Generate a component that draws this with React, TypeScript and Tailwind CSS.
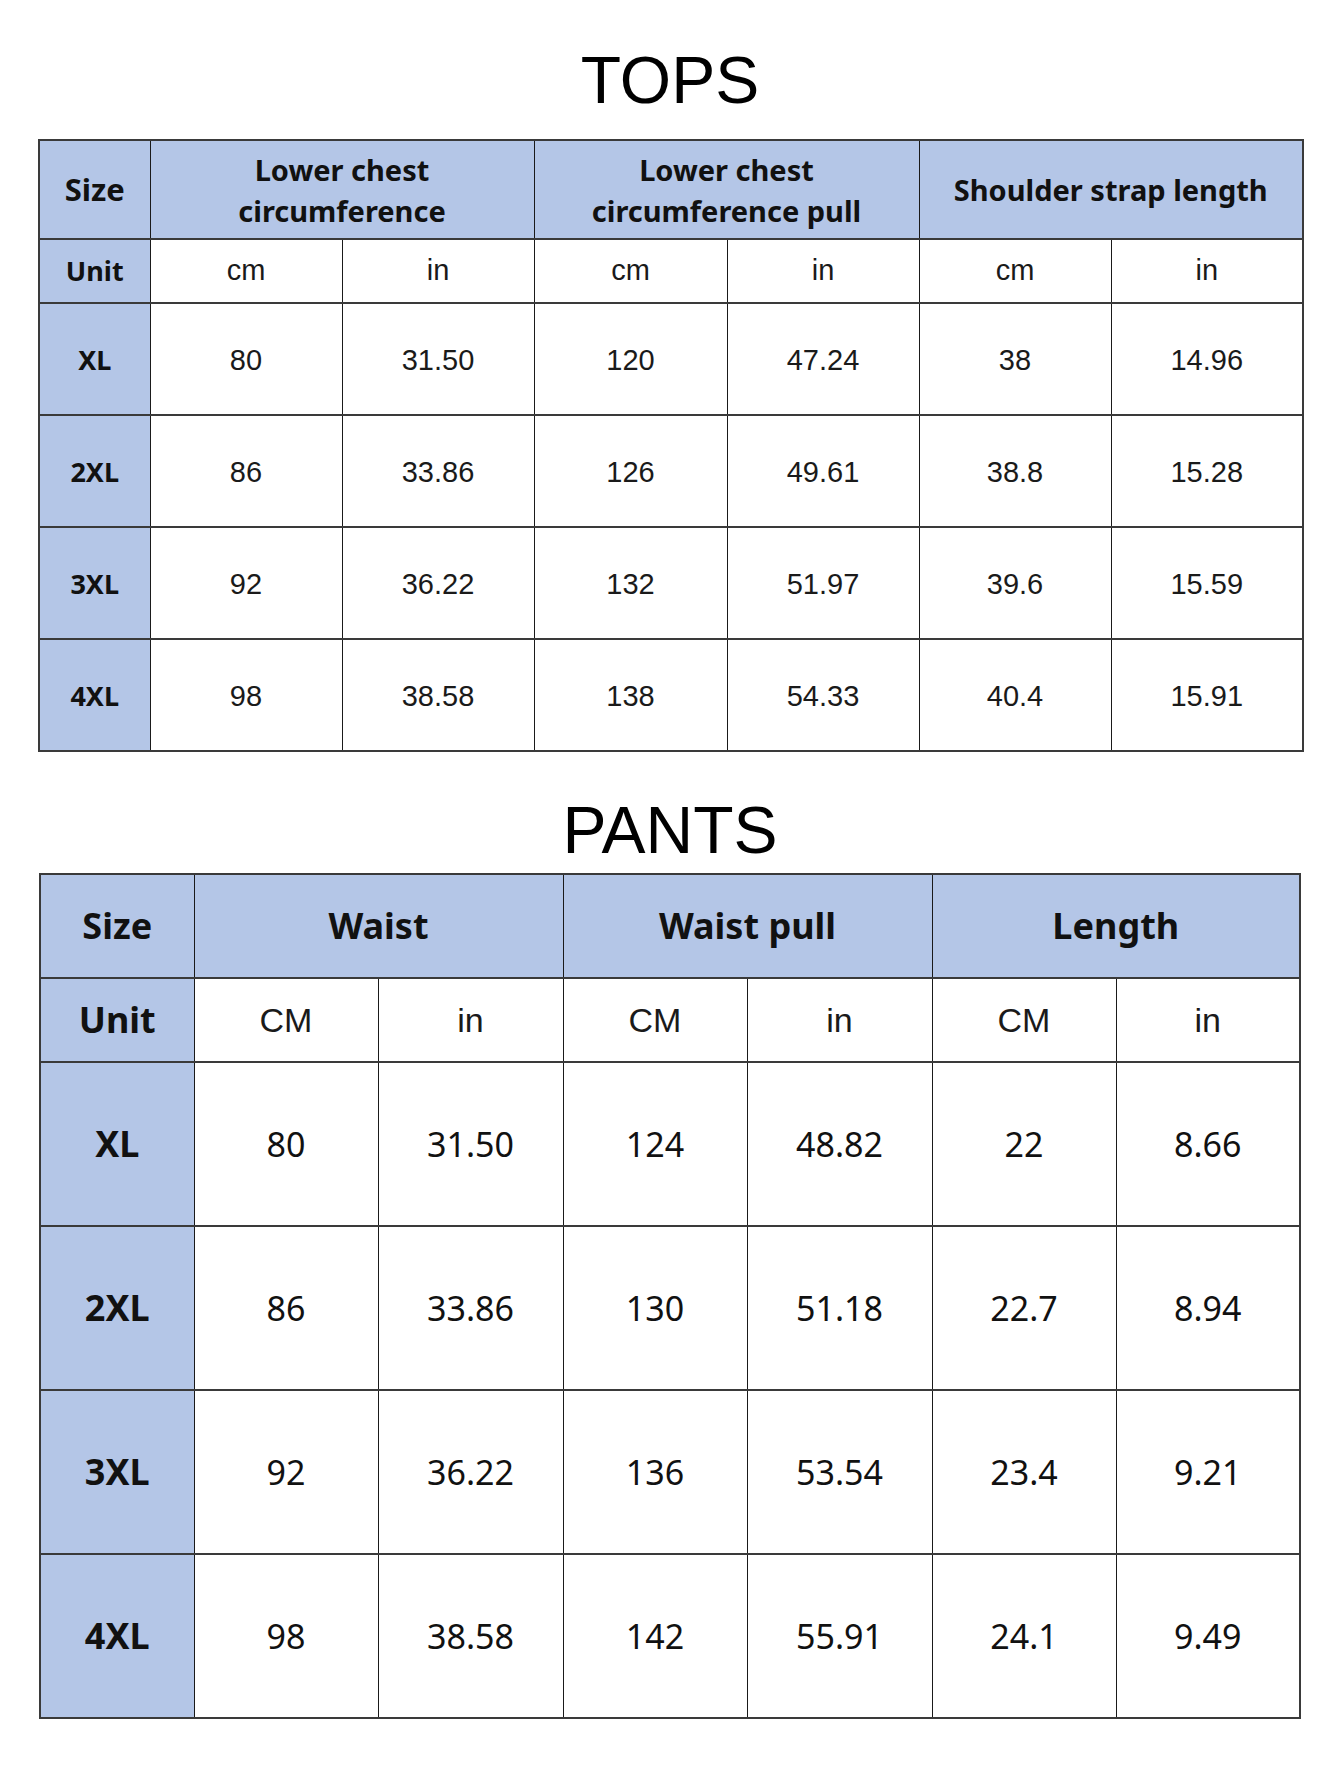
import React from 'react';

type Row = { size: string; values: string[] };

const topsRows: Row[] = [
  { size: 'XL', values: ['80', '31.50', '120', '47.24', '38', '14.96'] },
  { size: '2XL', values: ['86', '33.86', '126', '49.61', '38.8', '15.28'] },
  { size: '3XL', values: ['92', '36.22', '132', '51.97', '39.6', '15.59'] },
  { size: '4XL', values: ['98', '38.58', '138', '54.33', '40.4', '15.91'] },
];

const pantsRows: Row[] = [
  { size: 'XL', values: ['80', '31.50', '124', '48.82', '22', '8.66'] },
  { size: '2XL', values: ['86', '33.86', '130', '51.18', '22.7', '8.94'] },
  { size: '3XL', values: ['92', '36.22', '136', '53.54', '23.4', '9.21'] },
  { size: '4XL', values: ['98', '38.58', '142', '55.91', '24.1', '9.49'] },
];

const cell = 'border-x border-y-2 border-x-[#1a1a1a] border-y-[#3a3a3a] text-center align-middle p-0';
const blue = 'bg-[#b4c6e7]';
const bold = "font-['Noto_Sans',sans-serif] font-bold text-[#111]";
const arial = "font-['Liberation_Sans',Arial,sans-serif] text-[#1a1a1a]";

function TopsTable() {
  const groups = ['Lower chest\ncircumference', 'Lower chest\ncircumference pull', 'Shoulder strap length'];
  return (
    <table className="w-[1264px] table-fixed border-collapse border-2 border-[#3a3a3a]">
      <colgroup>
        <col className="w-[111px]" />
        <col className="w-[192px]" />
        <col className="w-[192px]" />
        <col className="w-[193px]" />
        <col className="w-[192px]" />
        <col className="w-[192px]" />
        <col className="w-[192px]" />
      </colgroup>
      <tbody>
        <tr className="h-[99px]">
          <td className={`${cell} ${blue} ${bold} text-[31px]`}>Size</td>
          {groups.map((g) => (
            <td key={g} colSpan={2} className={`${cell} ${blue} ${bold} text-[29px] leading-[41px] whitespace-pre-line`}>
              {g}
            </td>
          ))}
        </tr>
        <tr className="h-[64px]">
          <td className={`${cell} ${blue} ${bold} text-[27px]`}>Unit</td>
          {['cm', 'in', 'cm', 'in', 'cm', 'in'].map((u, i) => (
            <td key={i} className={`${cell} ${arial} text-[29px]`}>{u}</td>
          ))}
        </tr>
        {topsRows.map((r) => (
          <tr key={r.size} className="h-[112px]">
            <td className={`${cell} ${blue} ${bold} text-[27px] pt-[3px]`}>{r.size}</td>
            {r.values.map((v, i) => (
              <td key={i} className={`${cell} ${arial} text-[29px] pt-[3px]`}>{v}</td>
            ))}
          </tr>
        ))}
      </tbody>
    </table>
  );
}

function PantsTable() {
  const groups = ['Waist', 'Waist pull', 'Length'];
  return (
    <table className="w-[1260px] table-fixed border-collapse border-2 border-[#3a3a3a]">
      <colgroup>
        <col className="w-[154px]" />
        <col className="w-[184px]" />
        <col className="w-[185px]" />
        <col className="w-[184px]" />
        <col className="w-[185px]" />
        <col className="w-[184px]" />
        <col className="w-[184px]" />
      </colgroup>
      <tbody>
        <tr className="h-[104px]">
          <td className={`${cell} ${blue} ${bold} text-[36px]`}>Size</td>
          {groups.map((g) => (
            <td key={g} colSpan={2} className={`${cell} ${blue} ${bold} text-[36px]`}>{g}</td>
          ))}
        </tr>
        <tr className="h-[84px]">
          <td className={`${cell} ${blue} ${bold} text-[36px]`}>Unit</td>
          {['CM', 'in', 'CM', 'in', 'CM', 'in'].map((u, i) => (
            <td key={i} className={`${cell} ${arial} text-[34px]`}>{u}</td>
          ))}
        </tr>
        {pantsRows.map((r) => (
          <tr key={r.size} className="h-[164px]">
            <td className={`${cell} ${blue} ${bold} text-[36px]`}>{r.size}</td>
            {r.values.map((v, i) => (
              <td key={i} className={`${cell} font-['Noto_Sans',sans-serif] text-[#111] text-[34px]`}>{v}</td>
            ))}
          </tr>
        ))}
      </tbody>
    </table>
  );
}

export default function App() {
  return (
    <div className="w-[1340px] h-[1785px] bg-white flex flex-col">
      <h1 className="pt-[47px] text-center font-['Liberation_Sans',Arial,sans-serif] text-[66px] leading-[66px] text-black">
        TOPS
      </h1>
      <div className="mt-[26px] pl-[38px]">
        <TopsTable />
      </div>
      <h1 className="mt-[45px] text-center font-['Liberation_Sans',Arial,sans-serif] text-[66px] leading-[66px] text-black">
        PANTS
      </h1>
      <div className="mt-[10px] pl-[39px]">
        <PantsTable />
      </div>
    </div>
  );
}
